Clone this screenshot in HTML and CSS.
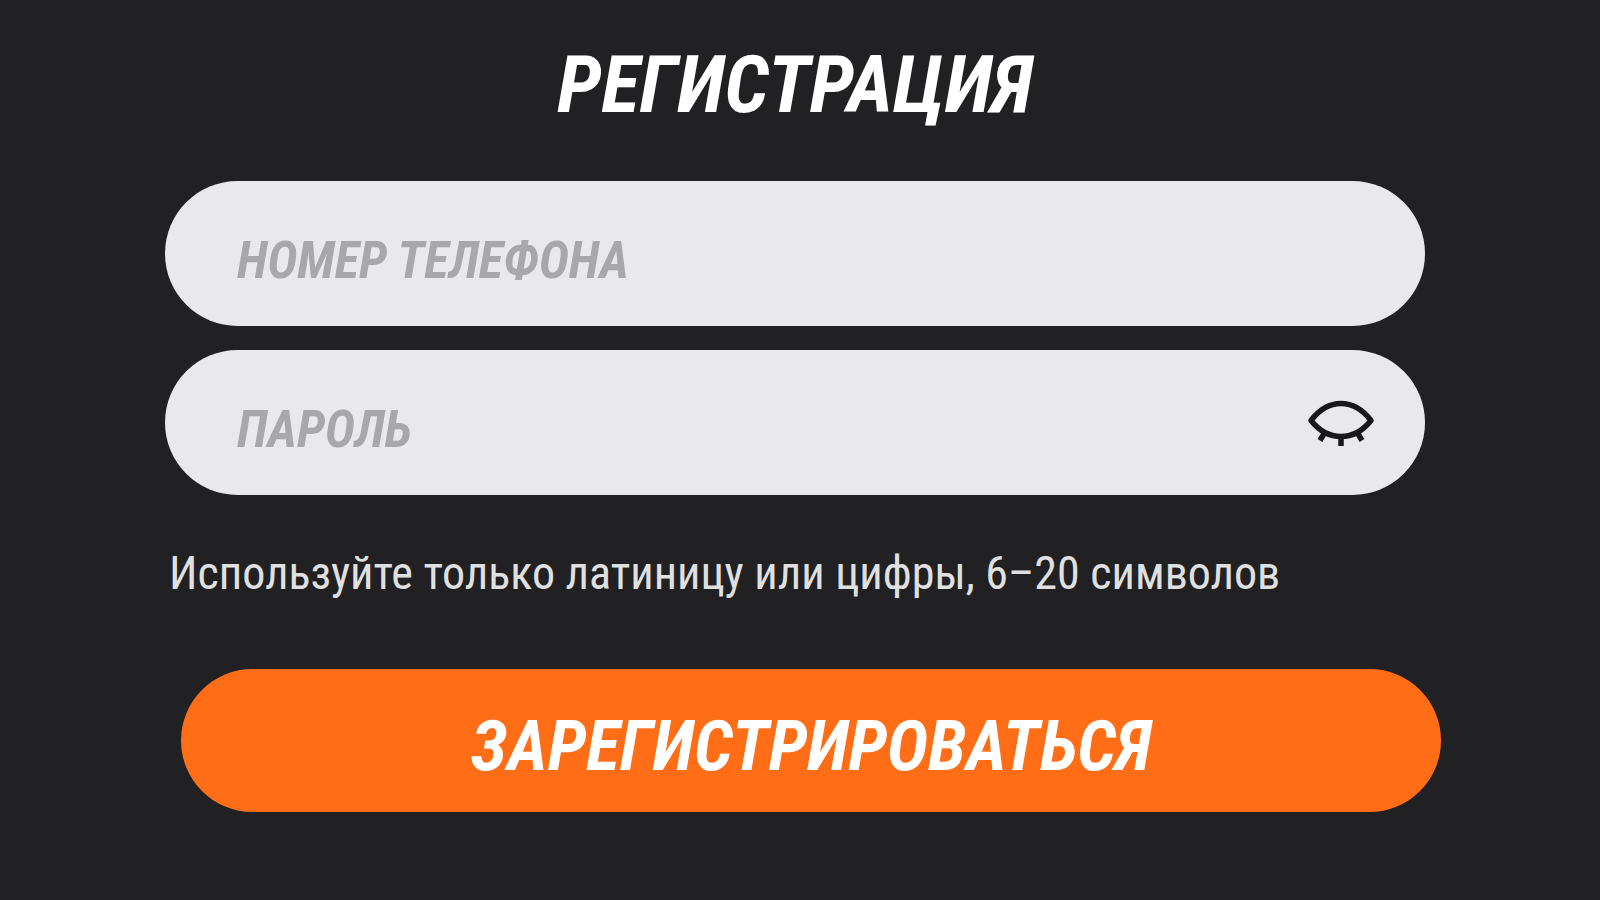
FILE: index.html
```html
<!DOCTYPE html>
<html lang="ru">

<head>
    <meta charset="UTF-8">
    <meta name="viewport" content="width=device-width, initial-scale=1.0">
    <title>Регистрация</title>
    <link rel="stylesheet" href="styles.css">
</head>

<body>
    <main class="page">
        <h1 class="title">РЕГИСТРАЦИЯ</h1>

        <form class="form" onsubmit="return false">
            <div class="field">
                <input type="tel" id="phone" class="field-input" placeholder="НОМЕР ТЕЛЕФОНА" aria-label="Номер телефона">
            </div>

            <div class="field">
                <input type="password" id="password" class="field-input" placeholder="ПАРОЛЬ" aria-label="Пароль" aria-describedby="passwordHint">
                <button type="button" class="btn-eye" aria-label="Показать пароль" onclick="togglePassword()">
                    <svg viewBox="0 0 68 48" width="68" height="48" fill="none" stroke="#18181b" stroke-width="5.5">
                        <path d="M4 21.500C12 11 22 4.500 34 4.500S56 11 64 21.500C56 31.500 46 37.500 34 37.500S12 31.500 4 21.500Z" stroke-linejoin="round" />
                        <path d="M17.500 34L13 41.500M34 37V47M50.500 34L55 41.500" />
                    </svg>
                </button>
            </div>

            <p class="hint" id="passwordHint">Используйте только латиницу или цифры, 6–20 символов</p>

            <button type="submit" class="btn-submit">ЗАРЕГИСТРИРОВАТЬСЯ</button>
        </form>
    </main>

    <script>
        function togglePassword() {
            const input = document.getElementById('password');
            input.type = input.type === 'password' ? 'text' : 'password';
        }
    </script>
</body>

</html>
```
FILE: styles.css
```css
:root {
    --primary-color: #ff6d17;
    --background-color: #212123;
    --field-color: #e9e9ec;
    --placeholder-color: #a8a8aa;
}

* {
    box-sizing: border-box;
}

body {
    font-family: 'Roboto Condensed', 'Liberation Sans Narrow', 'Liberation Sans', sans-serif;
    margin: 0;
    background-color: var(--background-color);
}

.page {
    padding: 33px 175px 40px 165px;
}

.title {
    margin: 0 0 44px;
    color: white;
    font-size: 80px;
    line-height: 104px;
    font-style: italic;
    font-weight: bold;
    text-align: center;
}

.form {
    display: flex;
    flex-direction: column;
}

.field {
    display: flex;
    align-items: center;
    height: 145px;
    margin-bottom: 24px;
    padding: 0 50px 0 72px;
    background: var(--field-color);
    border-radius: 73px;
}

.field-input {
    flex: 1;
    min-width: 0;
    height: 100%;
    padding: 14px 0 0;
    border: none;
    outline: none;
    background: none;
    color: var(--background-color);
    font-family: inherit;
    font-size: 51px;
    font-style: italic;
    font-weight: bold;
}

.field-input::placeholder {
    color: var(--placeholder-color);
    opacity: 1;
}

.btn-eye {
    display: flex;
    padding: 0;
    border: none;
    background: none;
    cursor: pointer;
}

.hint {
    margin: 22px 0 64px 4px;
    color: #e0e0e0;
    font-size: 46px;
    line-height: 64px;
}

.btn-submit {
    height: 143px;
    margin: 0 -16px 0 16px;
    padding: 10px 0 0;
    border: none;
    border-radius: 72px;
    background: var(--primary-color);
    color: white;
    font-family: inherit;
    font-size: 70px;
    font-style: italic;
    font-weight: bold;
    cursor: pointer;
}
```
